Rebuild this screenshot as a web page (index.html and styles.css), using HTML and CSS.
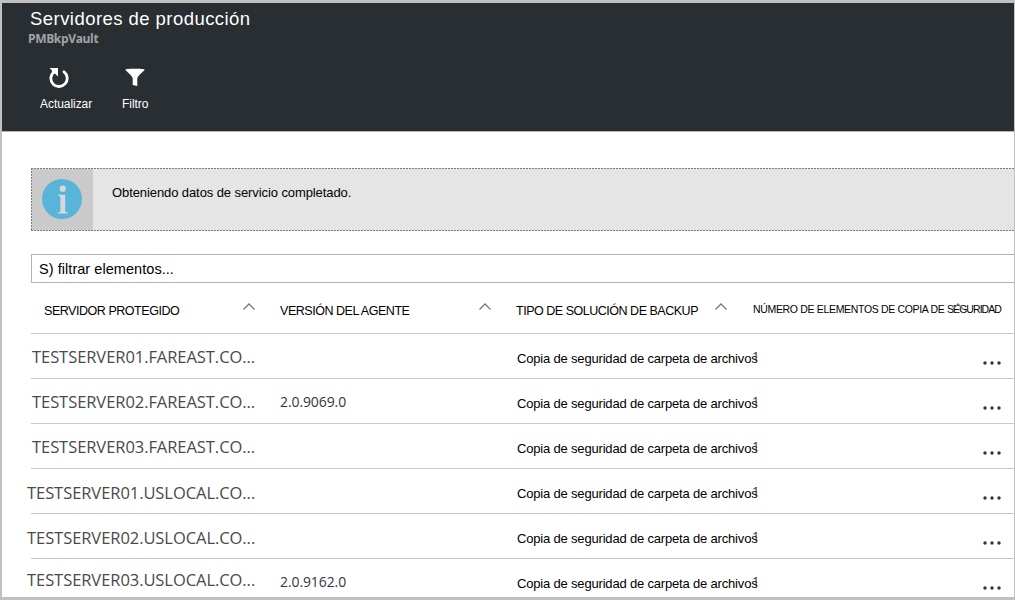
FILE: index.html
```html
<!DOCTYPE html>
<html lang="es">
<head>
<meta charset="utf-8">
<title>Servidores de producción</title>
<link rel="stylesheet" href="styles.css">
</head>
<body>
<div class="blade">
  <header class="head">
    <h1 class="title"><span>Servidores de producción</span></h1>
    <div class="subtitle"><span>PMBkpVault</span></div>
    <nav class="commands">
      <div class="command refresh">
        <svg class="command-icon" width="22" height="22" viewBox="0 0 22 22"><path d="M5.500 6.200A8.200 8.200 0 1 0 16 5.800" fill="none" stroke="#fff" stroke-width="2.800" stroke-linecap="round"/><path d="M1.500 2H10V10.400L6.800 7.600 4.600 8.500 3.600 4Z" fill="#fff"/></svg>
        <span>Actualizar</span>
      </div>
      <div class="command filter">
        <svg class="command-icon" width="20" height="22" viewBox="0 0 20 22"><path d="M.3 3.600C.3 2.500 19.700 2.500 19.700 3.600C18.500 6 14 8.500 12.300 12V20L7.700 19V12C6 8.500 1.500 6 .3 3.600Z" fill="#fff"/></svg>
        <span>Filtro</span>
      </div>
    </nav>
  </header>
  <main class="content">
    <section class="notice">
      <div class="notice-icon">
        <svg width="40" height="40" viewBox="0 0 40 40"><circle cx="20" cy="20" r="20" fill="#59b4d9"/><circle cx="20.700" cy="9.700" r="3.100" fill="#d8d8d8"/><path d="M16 15.800H23.200V32.700L25.800 33.400V34.400H15.800V33.400L18.400 32.700V17.400L16 16.800Z" fill="#d8d8d8"/></svg>
      </div>
      <p class="notice-text"><span>Obteniendo datos de servicio completado.</span></p>
    </section>
    <div class="search"><span>S) filtrar elementos...</span></div>
    <div class="table">
      <div class="row labels">
        <div class="c1"><span>SERVIDOR PROTEGIDO</span><svg class="sort" width="12" height="7" viewBox="0 0 12 7"><path d="M.5 6.500 6 1l5.500 5.500"/></svg></div>
        <div class="c2"><span>VERSIÓN DEL AGENTE</span><svg class="sort" width="12" height="7" viewBox="0 0 12 7"><path d="M.5 6.500 6 1l5.500 5.500"/></svg></div>
        <div class="c3"><span>TIPO DE SOLUCIÓN DE BACKUP</span><svg class="sort" width="12" height="7" viewBox="0 0 12 7"><path d="M.5 6.500 6 1l5.500 5.500"/></svg></div>
        <div class="c4"><span>NÚMERO DE ELEMENTOS DE COPIA DE <b>SEGURIDAD</b></span><svg class="sort over" width="12" height="7" viewBox="0 0 12 7"><path d="M.5 6.500 6 1l5.500 5.500"/></svg></div>
      </div>
      <div class="row"><div class="server"><span>TESTSERVER01.FAREAST.CO...</span></div><div class="version"></div><div class="type"><span>Copia de seguridad de carpeta de archivos</span></div><div class="count">1</div><svg class="more" width="18" height="4" viewBox="0 0 18 4"><circle cx="2" cy="2" r="1.700"/><circle cx="9" cy="2" r="1.700"/><circle cx="16" cy="2" r="1.700"/></svg></div>
      <div class="row"><div class="server"><span>TESTSERVER02.FAREAST.CO...</span></div><div class="version"><span>2.0.9069.0</span></div><div class="type"><span>Copia de seguridad de carpeta de archivos</span></div><div class="count">1</div><svg class="more" width="18" height="4" viewBox="0 0 18 4"><circle cx="2" cy="2" r="1.700"/><circle cx="9" cy="2" r="1.700"/><circle cx="16" cy="2" r="1.700"/></svg></div>
      <div class="row"><div class="server"><span>TESTSERVER03.FAREAST.CO...</span></div><div class="version"></div><div class="type"><span>Copia de seguridad de carpeta de archivos</span></div><div class="count">1</div><svg class="more" width="18" height="4" viewBox="0 0 18 4"><circle cx="2" cy="2" r="1.700"/><circle cx="9" cy="2" r="1.700"/><circle cx="16" cy="2" r="1.700"/></svg></div>
      <div class="row"><div class="server local"><span>TESTSERVER01.USLOCAL.CO...</span></div><div class="version"></div><div class="type"><span>Copia de seguridad de carpeta de archivos</span></div><div class="count">1</div><svg class="more" width="18" height="4" viewBox="0 0 18 4"><circle cx="2" cy="2" r="1.700"/><circle cx="9" cy="2" r="1.700"/><circle cx="16" cy="2" r="1.700"/></svg></div>
      <div class="row"><div class="server local"><span>TESTSERVER02.USLOCAL.CO...</span></div><div class="version"></div><div class="type"><span>Copia de seguridad de carpeta de archivos</span></div><div class="count">1</div><svg class="more" width="18" height="4" viewBox="0 0 18 4"><circle cx="2" cy="2" r="1.700"/><circle cx="9" cy="2" r="1.700"/><circle cx="16" cy="2" r="1.700"/></svg></div>
      <div class="row last"><div class="server local"><span>TESTSERVER03.USLOCAL.CO...</span></div><div class="version"><span>2.0.9162.0</span></div><div class="type"><span>Copia de seguridad de carpeta de archivos</span></div><div class="count">1</div><svg class="more" width="18" height="4" viewBox="0 0 18 4"><circle cx="2" cy="2" r="1.700"/><circle cx="9" cy="2" r="1.700"/><circle cx="16" cy="2" r="1.700"/></svg></div>
    </div>
  </main>
</div>
</body>
</html>
```
FILE: styles.css
```css
* { box-sizing: border-box; }
html, body { margin: 0; height: 603px; overflow: hidden; background: #fff; }
body { font-family: "Liberation Sans", Arial, sans-serif; color: #000; }

.blade {
  width: 1015px;
  height: 600px;
  border: solid #c0c0c0;
  border-width: 3px 1px 3px 2px;
  overflow: hidden;
}

.head { height: 129px; background: #292e32; border-bottom: 1px solid #b5b5b5; color: #fff; }
.title { margin: 0; padding: 4px 0 0 28px; font-size: 18.500px; font-weight: 400; line-height: 24px; letter-spacing: .45px; }
.subtitle { padding-left: 26px; font: 700 12px/15px "Open Sans", sans-serif; letter-spacing: -.35px; color: #a2a5a7; }
.commands { display: flex; padding: 20px 0 0 38px; font-size: 12px; line-height: 14px; letter-spacing: -.05px; }
.command { display: flex; flex-direction: column; gap: 9px; }
.refresh { width: 82px; }
.refresh .command-icon { margin-left: 8px; }
.filter .command-icon { margin-left: 3px; }
.command-icon { display: block; }

.content { padding: 36px 0 0 29px; }
.notice {
  --dash: #7e7e7e 0 2px, transparent 2px 3px;
  display: flex;
  height: 63px;
  padding: 1px 0 1px 1px;
  background:
    repeating-linear-gradient(90deg, var(--dash)) 0 0 / 100% 1px no-repeat,
    repeating-linear-gradient(90deg, var(--dash)) 0 100% / 100% 1px no-repeat,
    repeating-linear-gradient(180deg, var(--dash)) 0 0 / 1px 100% no-repeat,
    #e5e5e5;
}
.notice-icon { width: 61px; padding: 10px; background: #cacaca; }
.notice-icon svg { display: block; }
.notice-text { margin: 0; padding: 16px 0 0 19px; font-size: 13px; line-height: 16px; letter-spacing: -.09px; }
.search { height: 29px; margin-top: 23px; padding-left: 7px; border: 1px solid #b2b2b2; border-right: 0; font-size: 14.500px; line-height: 28px; letter-spacing: .05px; }

.table { display: flex; flex-direction: column; }
.row {
  display: grid;
  grid-template-columns: 249px 236px 236px 231px 1fr;
  height: 45px;
  border-bottom: 1px solid #c8c8c8;
  white-space: nowrap;
}
.last { border-bottom: 0; }
.labels { height: 51px; grid-template-columns: 236px 236px 236px 1fr; font-size: 12.500px; line-height: 16px; }
.labels > div { display: flex; justify-content: space-between; padding: 20px 12px 0 13px; }
.labels .c1 { letter-spacing: -.46px; }
.labels .c2 { letter-spacing: -.46px; }
.labels .c3 { letter-spacing: -.48px; }
.sort { fill: none; stroke: #777; stroke-width: 1.300; }
.labels .c4 { position: relative; padding: 18px 0 0 14px; font-size: 10.500px; letter-spacing: -.33px; }
.c4 b { font-weight: 400; letter-spacing: -.95px; }
.over { position: absolute; left: 213px; top: 20px; }

.server { padding: 11px 0 0 1px; font: 400 16.500px/24px "Open Sans", sans-serif; letter-spacing: -.06px; color: #4a4a4a; }
.local { margin-left: -4px; padding: 12px 0 0; letter-spacing: -.06px; }
.last .server { padding-top: 9px; }
.version { padding-top: 12px; font: 400 14px/22px "Open Sans", sans-serif; letter-spacing: -.1px; color: #33363c; }
.type { padding: 17px 0 0 1px; font-size: 13px; line-height: 16px; letter-spacing: -.18px; }
.count { padding: 14px 0 0; font: 400 13px/16px "Open Sans", sans-serif; color: #333; }
.more { margin-top: 27px; fill: #30343c; }
```
